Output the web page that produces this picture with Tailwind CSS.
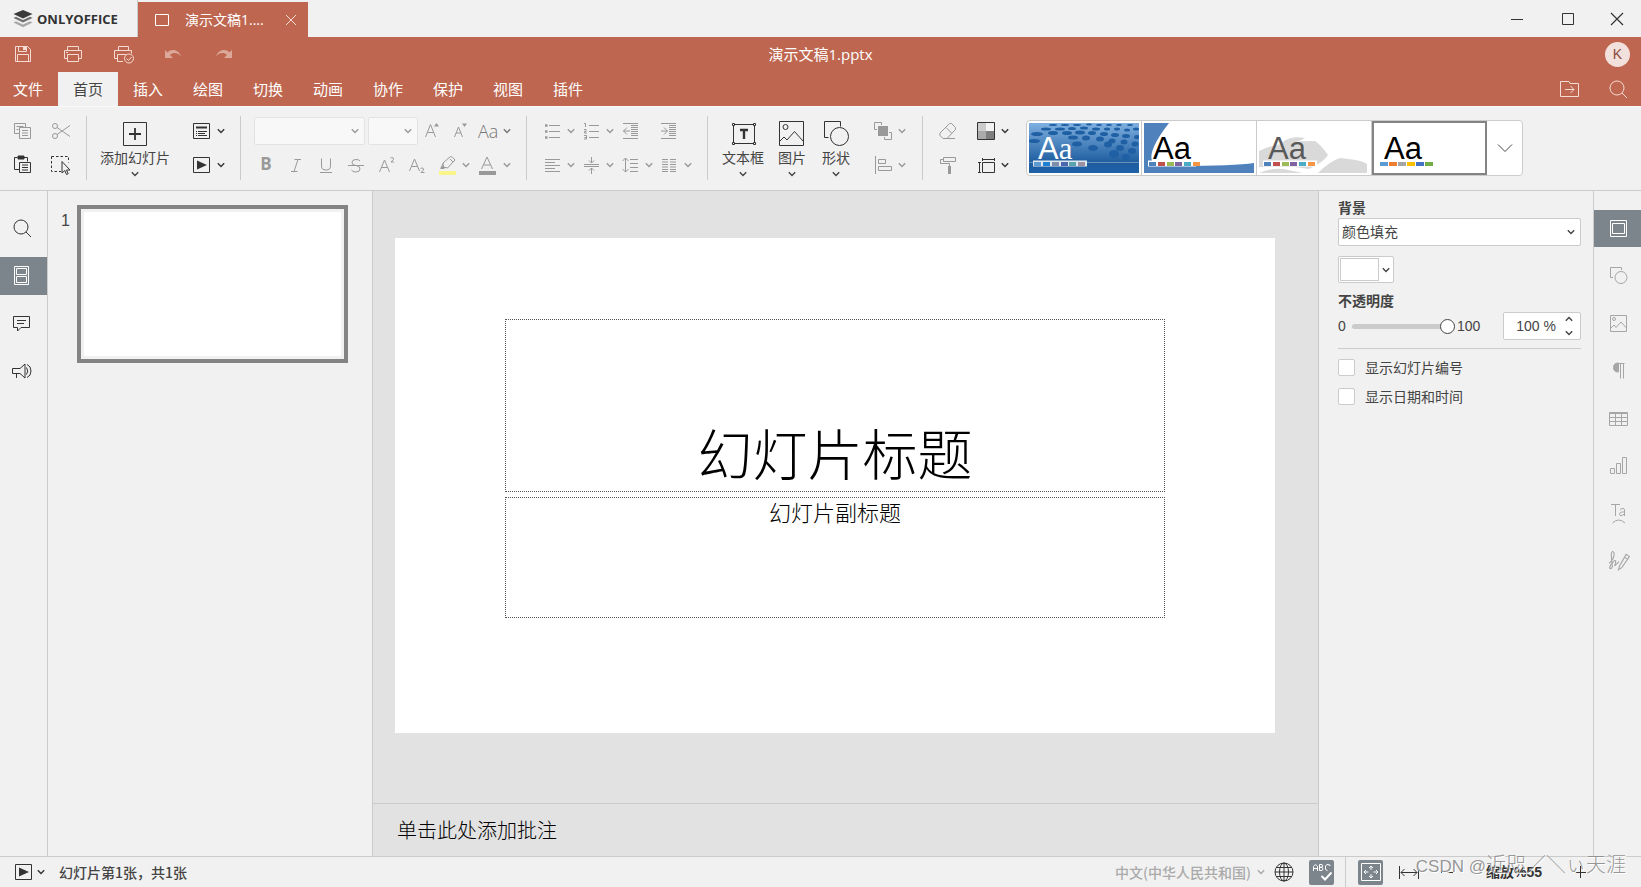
<!DOCTYPE html>
<html lang="zh-CN">
<head>
<meta charset="utf-8">
<title>演示文稿1.pptx - ONLYOFFICE</title>
<script src="https://cdn.jsdelivr.net/npm/@tailwindcss/browser@4"></script>
</head>
<body class="relative h-screen flex flex-col overflow-hidden bg-[#f1f1f1] text-[#444] text-sm font-['Open_Sans','Noto_Sans_CJK_SC',sans-serif]">
<svg class="hidden">
  <symbol id="chev" viewBox="0 0 8 8"><path d="M.8 2.2 4 5.4 7.2 2.2" fill="none" stroke="currentColor" stroke-width="1.4"/></symbol>
  <symbol id="play" viewBox="0 0 20 20"><path d="M2.500 2.500h16v15h-16z" fill="none" stroke="currentColor"/><path d="M6 5.500v9l10-4.500z" fill="currentColor"/></symbol>
  <symbol id="shapes" viewBox="0 0 26 26"><path d="M5.500 17.500H1.500v-16h16v5" fill="none" stroke="currentColor"/><circle cx="16.500" cy="16.500" r="9" fill="none" stroke="currentColor"/></symbol>
  <symbol id="image" viewBox="0 0 26 26"><path d="M.5 1.500h24v24H.5zM1 21l4-4 3 3 7.500-8.500L24 21" fill="none" stroke="currentColor"/><circle cx="6.500" cy="7" r="2.500" fill="none" stroke="currentColor"/></symbol>
  <symbol id="search" viewBox="0 0 20 20"><circle cx="9" cy="9" r="7" fill="none" stroke="currentColor"/><path d="m14 14 5 5" stroke="currentColor"/></symbol>
</svg>

<!-- Window title bar -->
<div class="flex h-[37px] shrink-0 items-end">
  <div class="flex h-[37px] w-[138px] items-center gap-1 pl-[13px] border-r border-[#ccc]">
    <svg class="size-5" viewBox="0 0 20 20"><path d="m10 1 9.500 4L10 9.500.5 5z" fill="#3a3a3a"/><path d="m.5 9 2.500-1.200L10 11l7-3.200L19.500 9 10 13.500z" fill="#6e6e6e"/><path d="m.5 13.500 2.500-1.200 7 3.200 7-3.200 2.500 1.200L10 18.200z" fill="#a8a8a8"/></svg>
    <span class="text-[13px] leading-5 font-bold text-[#333] font-['Open_Sans',sans-serif]">ONLYOFFICE</span>
  </div>
  <div class="flex h-[35px] w-[170px] items-center bg-[#be664f] pl-[17px] text-white">
    <svg class="size-4" viewBox="0 0 16 16"><path d="M.5 2.500h13v11H.5z" fill="none" stroke="#fff"/></svg>
    <span class="ml-[14px] w-24 whitespace-nowrap text-sm">演示文稿1....</span>
    <button class="ml-1" aria-label="关闭标签"><svg class="size-3" viewBox="0 0 12 12"><path d="m1 1 10 10M11 1 1 11" stroke="#f4dcd5"/></svg></button>
  </div>
  <div class="ml-auto flex h-[37px] items-center">
    <button class="grid h-full w-[51px] place-items-center" aria-label="最小化"><svg class="size-[14px]" viewBox="0 0 14 14"><path d="M1 7.500h12" stroke="#333"/></svg></button>
    <button class="grid h-full w-[51px] place-items-center" aria-label="最大化"><svg class="size-[14px]" viewBox="0 0 14 14"><path d="M1.500 1.500h11v11h-11z" fill="none" stroke="#333"/></svg></button>
    <button class="grid h-full w-[48px] place-items-center" aria-label="关闭"><svg class="size-[14px]" viewBox="0 0 14 14"><path d="m1 1 12 12M13 1 1 13" stroke="#333" stroke-width="1.200"/></svg></button>
  </div>
</div>

<!-- Header -->
<header class="shrink-0 bg-[#be664f] text-white">
  <div class="grid h-[35px] grid-cols-[1fr_auto_1fr] items-center pb-px">
    <div class="flex items-center">
      <button class="grid w-[46px] place-items-center" aria-label="保存"><svg class="size-[18px]" viewBox="0 0 18 18" fill="none" stroke="#f4dcd5"><path d="M1.500 1.500h12l3 3v12h-15zM4.500 1.500v5h8v-5M3.500 16.500v-7h11v7"/><path d="M9 2h3v3H9z" fill="#f4dcd5" stroke="none"/></svg></button>
      <button class="grid w-[54px] place-items-center" aria-label="打印"><svg class="size-5" viewBox="0 0 20 20" fill="none" stroke="#f4dcd5"><path d="M4.500 6V2.500h11V6M4.500 14.500h-3v-8h17v8h-3M4.500 10.500h11v7h-11zM3 8.500h2"/></svg></button>
      <button class="grid w-[48px] place-items-center" aria-label="快速打印"><svg class="size-5" viewBox="0 0 20 20" fill="none" stroke="#f4dcd5"><path d="M4.500 6V2.500h10V6M3.500 14.500h-3v-8h17v3M9 17.500H3.500v-7H12"/><circle cx="15" cy="14.500" r="4.500"/><path d="m12.500 14.500 2 2 3-3.500"/></svg></button>
      <button class="grid w-[50px] place-items-center" aria-label="撤销"><svg class="size-[18px]" viewBox="0 0 18 18"><path d="M1 5v8h8L6 10c3-3 8-2.500 11 1.500C15 5 8 3 3.500 7.500z" fill="#dba899"/></svg></button>
      <button class="grid w-[51px] place-items-center" aria-label="重做"><svg class="size-[18px]" viewBox="0 0 18 18"><path d="M17 5v8H9l3-3c-3-3-8-2.500-11 1.500C3 5 10 3 14.500 7.500z" fill="#dba899"/></svg></button>
    </div>
    <h1 class="text-[15px] leading-5">演示文稿1.pptx</h1>
    <div class="flex justify-end pr-[11px]"><button class="size-[25px] rounded-full bg-[#f2e0dc] text-sm leading-none text-[#8d4a3a] font-['Liberation_Sans',sans-serif]">K</button></div>
  </div>
  <div class="flex h-[34px] items-stretch text-[15px]">
    <nav class="flex [&_button]:pt-0.5" aria-label="功能区">
      <button class="w-[58px] pr-0.5">文件</button>
      <button class="w-[60px] bg-[#f1f1f1] text-[#444]">首页</button>
      <button class="w-[60px]">插入</button>
      <button class="w-[60px]">绘图</button>
      <button class="w-[60px]">切换</button>
      <button class="w-[60px]">动画</button>
      <button class="w-[60px]">协作</button>
      <button class="w-[60px]">保护</button>
      <button class="w-[60px]">视图</button>
      <button class="w-[60px]">插件</button>
    </nav>
    <div class="ml-auto flex">
      <button class="grid w-[51px] place-items-center" aria-label="打开文件位置"><svg class="size-5" viewBox="0 0 20 20" fill="none" stroke="#f4dcd5"><path d="M.5 17.500v-15h8.500l1 2h8.500v13zM5 10.500h9M10.500 7l3.500 3.500-3.500 3.500"/></svg></button>
      <button class="grid w-[46px] place-items-center text-[#f4dcd5]" aria-label="搜索"><svg class="size-5"><use href="#search"/></svg></button>
    </div>
  </div>
</header>

<!-- Toolbar -->
<div class="flex h-[85px] shrink-0 items-center border-b border-[#cbcbcb] border-t border-t-[#fafafa] pb-0.5 text-[#999]">
  <div class="grid w-[86px] grid-cols-[38px_38px] grid-rows-[34px_34px] place-items-center pl-1">
    <button aria-label="复制"><svg class="size-5" viewBox="0 0 20 20" fill="none" stroke="currentColor"><path d="M6.500 12.500h-5v-10h11v4M3.500 5.500h7M3.500 8.500h2"/><path d="M6.500 6.500h11v11h-11zM9 9.500h6M9 12h6M9 14.500h6"/></svg></button>
    <button aria-label="剪切"><svg class="size-5" viewBox="0 0 20 20" fill="none" stroke="currentColor"><circle cx="4" cy="5" r="2.500"/><circle cx="4" cy="15" r="2.500"/><path d="M6 13.500 19 4.500M6 6.500l13 9"/></svg></button>
    <button class="text-[#333]" aria-label="粘贴"><svg class="size-5" viewBox="0 0 20 20" fill="none" stroke="currentColor"><path d="M6 14.500H1.500v-12h3M11 2.500h3.500v4"/><path d="M5 1h6v3H5z" fill="currentColor"/><path d="M6.500 7.500h11v10h-11zM9 10h6M9 12.500h6M9 15h6"/></svg></button>
    <button class="text-[#333]" aria-label="全选"><svg class="size-5" viewBox="0 0 20 20" fill="none" stroke="currentColor"><path d="M.5 1.500h17v6M.5 1.500v15H10" stroke-dasharray="2.500 2"/><path d="M11 6.500v11.500l2.800-2.500 1.700 4 1.700-.8-1.700-3.700H19z" fill="#f1f1f1"/></svg></button>
  </div>
  <div class="h-16 w-px bg-[#cbcbcb]"></div>

  <div class="flex w-[153px] items-center text-[#444]">
    <button class="flex h-[68px] w-24 flex-col items-center pt-2 text-[#444]">
      <svg class="size-6 text-[#333]" viewBox="0 0 24 24" fill="none" stroke="currentColor"><path d="M.5.5h23v23H.5z"/><path d="M12 6v12M6 12h12" stroke-width="1.800"/></svg>
      <span class="mt-1 text-sm leading-4 whitespace-nowrap">添加幻灯片</span>
      <svg class="mt-1 size-2"><use href="#chev"/></svg>
    </button>
    <div class="ml-2 grid grid-rows-[34px_34px] items-center text-[#333]">
      <button class="flex items-center gap-[6px]" aria-label="版式"><svg class="size-5" viewBox="0 0 20 20" fill="none" stroke="currentColor"><path d="M2.500 2.500h16v15h-16z"/><path d="M5 6.500h11" stroke-width="2"/><path d="M5 10.500h1M7 10.500h9M5 12.500h1M7 12.500h7M5 14.500h1M7 14.500h9"/></svg><svg class="size-2"><use href="#chev"/></svg></button>
      <button class="flex items-center gap-[6px]" aria-label="播放"><svg class="size-5"><use href="#play"/></svg><svg class="size-2"><use href="#chev"/></svg></button>
    </div>
  </div>
  <div class="h-16 w-px bg-[#cbcbcb]"></div>

  <div class="w-[285px]">
    <div class="flex h-[34px] items-center pl-[13px]">
      <button class="flex h-[28px] w-[111px] items-center justify-end rounded-xs border border-[#e3e3e3] bg-[#f8f8f8] pr-[5px]" aria-label="字体"><svg class="size-2"><use href="#chev"/></svg></button>
      <button class="ml-[3px] flex h-[28px] w-[50px] items-center justify-end rounded-xs border border-[#e3e3e3] bg-[#f8f8f8] pr-[5px]" aria-label="字号"><svg class="size-2"><use href="#chev"/></svg></button>
      <button class="ml-[7px] w-4" aria-label="增大字号"><svg class="size-4" viewBox="0 0 16 16" fill="none" stroke="currentColor"><path d="m.5 14 5-12.500 5 12.500M2.500 9.500h6" /><path d="m9 3.500 2.500-3.500L14 3.500z" fill="currentColor" stroke="none"/></svg></button>
      <button class="ml-3 w-4" aria-label="减小字号"><svg class="size-4" viewBox="0 0 16 16" fill="none" stroke="currentColor"><path d="m1.500 14 4-10 4 10M3 10h5"/><path d="m9 .5 2.500 3.500L14 .5z" fill="currentColor" stroke="none"/></svg></button>
      <button class="ml-[9px] flex items-center gap-[5px] text-[18px] leading-6 font-light text-[#777]" aria-label="更改大小写"><span class="w-5">Aa</span><svg class="size-2"><use href="#chev"/></svg></button>
    </div>
    <div class="flex h-[34px] items-center pl-[10px]">
      <button class="w-[30px] text-[17px] font-bold" aria-label="加粗">B</button>
      <button class="grid w-[30px] place-items-center" aria-label="斜体"><svg class="h-4 w-3" viewBox="0 0 12 16" fill="none" stroke="currentColor"><path d="M4.500 2.500H11M1 14.500h6.500M8 2.500l-4 12"/></svg></button>
      <button class="grid w-[30px] place-items-center" aria-label="下划线"><svg class="h-4 w-3" viewBox="0 0 12 16" fill="none" stroke="currentColor"><path d="M1.500 1.500v7.500q0 4 4.500 4t4.500-4V1.500M0 15.500h12"/></svg></button>
      <button class="grid w-[30px] place-items-center" aria-label="删除线"><svg class="size-4" viewBox="0 0 16 16" fill="none" stroke="currentColor"><path d="M12 4Q11 2.500 8 2.500 4 2.500 4 5.500T8 8.500t4 3.500q0 3-4 3-3.500 0-4.500-2M0 8.500h16"/></svg></button>
      <button class="grid w-[31px] place-items-center" aria-label="上标"><svg class="h-4 w-4" viewBox="0 0 16 16" fill="none" stroke="currentColor"><path d="m.5 15 5-12 5 12M2.500 10.500h6M11.500 1Q13 0 14.300 1T12 5h3"/></svg></button>
      <button class="grid w-[30px] place-items-center" aria-label="下标"><svg class="h-4 w-4" viewBox="0 0 16 16" fill="none" stroke="currentColor"><path d="m.5 14 5-12 5 12M2.500 9.500h6M11.500 11.500q1.500-1.200 2.800 0t-2.300 4h3.500"/></svg></button>
      <button class="ml-1.5 flex items-center gap-[4px]" aria-label="突出显示颜色"><svg class="size-5" viewBox="0 0 20 20" fill="none" stroke="currentColor"><path d="m5 8 7.500-6.500q2 0 4.500 3.500L9.500 13 5.500 12zM12 4l3 3M5 8.500 3 13l4-.500"/><path d="M2 14h4l1-1.500L4.500 11z" fill="currentColor" stroke="none"/><path d="M1 16h17v4H1z" fill="#f8f58a" stroke="none"/></svg><svg class="size-2"><use href="#chev"/></svg></button>
      <button class="ml-2 flex items-center gap-[5px]" aria-label="字体颜色"><svg class="size-5" viewBox="0 0 20 20" fill="none" stroke="currentColor"><path d="m3.500 14 5.500-12 5.500 12M5.500 10h7"/><path d="M1 16h17v4H1z" fill="#999" stroke="none"/></svg><svg class="size-2"><use href="#chev"/></svg></button>
    </div>
  </div>
  <div class="h-16 w-px bg-[#cbcbcb]"></div>

  <div class="grid w-[180px] grid-cols-[39px_39px_39px_39px] grid-rows-[34px_34px] items-center pl-4">
    <button class="flex items-center gap-1.5" aria-label="项目符号"><svg class="size-[18px]" viewBox="0 0 18 18" stroke="currentColor"><path d="M6 3.500h11M6 9.500h11M6 15.500h11"/><path d="M2 3.500h2.500M2 9.500h2.500M2 15.500h2.500" stroke-width="2.500"/></svg><svg class="size-2"><use href="#chev"/></svg></button>
    <button class="flex items-center gap-1.5" aria-label="编号"><svg class="size-[18px]" viewBox="0 0 18 18" fill="none" stroke="currentColor"><path d="M7 3.500h10M7 9.500h10M7 15.500h10M2 1.500h1.500V5M2 7.500h2v2H2.500V11H5M2 13.500h2.500v3.500H2M2.500 15.500h2"/></svg><svg class="size-2"><use href="#chev"/></svg></button>
    <button aria-label="减少缩进"><svg class="size-[18px]" viewBox="0 0 18 18" fill="none" stroke="currentColor"><path d="M2 1.500h15M10 3.500h7M10 5.500h7M10 7.500h7M10 9.500h7M10 11.500h7M10 13.500h7M2 16.500h15M2.500 9H9M6 5.500 2.500 9 6 12.500"/></svg></button>
    <button aria-label="增加缩进"><svg class="size-[18px]" viewBox="0 0 18 18" fill="none" stroke="currentColor"><path d="M1 1.500h15M9 3.500h7M9 5.500h7M9 7.500h7M9 9.500h7M9 11.500h7M9 13.500h7M1 16.500h15M1 9h6.500M4 5.500 7.500 9 4 12.500"/></svg></button>
    <button class="flex items-center gap-1.5" aria-label="水平对齐"><svg class="size-[18px]" viewBox="0 0 18 18" stroke="currentColor"><path d="M2 3.500h15M2 6.500h10M2 9.500h15M2 12.500h10M2 15.500h15"/></svg><svg class="size-2"><use href="#chev"/></svg></button>
    <button class="flex items-center gap-1.5" aria-label="垂直对齐"><svg class="size-[18px]" viewBox="0 0 18 18" fill="none" stroke="currentColor"><path d="M2 8.500h15M2 10.500h15M9.500 1v6M7 4.500 9.500 7 12 4.500M9.500 18v-6M7 14.500l2.500-2.500 2.500 2.500"/></svg><svg class="size-2"><use href="#chev"/></svg></button>
    <button class="flex items-center gap-1.5" aria-label="行距"><svg class="size-[18px]" viewBox="0 0 18 18" fill="none" stroke="currentColor"><path d="M4.500 2v14M1.500 5l3-3 3 3M1.500 13l3 3 3-3M9 3.500h8M9 7.500h8M9 11.500h8M9 15.500h8"/></svg><svg class="size-2"><use href="#chev"/></svg></button>
    <button class="flex items-center gap-1.5" aria-label="分栏"><svg class="size-[18px]" viewBox="0 0 18 18" stroke="currentColor"><path d="M2 3.500h6M10 3.500h6M2 6h6M10 6h6M2 8.500h6M10 8.500h6M2 11h6M10 11h6M2 13.500h6M10 13.500h6M2 15.500h6M10 15.500h6"/></svg><svg class="size-2"><use href="#chev"/></svg></button>
  </div>
  <div class="h-16 w-px bg-[#cbcbcb]"></div>

  <div class="flex w-[214px] items-center pl-[7px]">
    <button class="flex h-[68px] w-14 flex-col items-center pt-1.5 text-[#444]">
      <svg class="size-[26px] text-[#333]" viewBox="0 0 26 26" fill="none" stroke="currentColor"><path d="M3.500 4.500h21v19h-21z"/><path d="M2.500 3.500h2v2h-2zM23.500 3.500h2v2h-2zM2.500 22.500h2v2h-2zM23.500 22.500h2v2h-2z" fill="#f1f1f1"/><path d="M10 10h8M14 10v9" stroke-width="2.400"/></svg>
      <span class="mt-1 text-sm leading-4">文本框</span>
      <svg class="mt-1 size-2"><use href="#chev"/></svg>
    </button>
    <button class="flex h-[68px] w-[42px] flex-col items-center pt-1.5 text-[#444]">
      <svg class="size-[26px] text-[#333]"><use href="#image"/></svg>
      <span class="mt-1 text-sm leading-4">图片</span>
      <svg class="mt-1 size-2"><use href="#chev"/></svg>
    </button>
    <button class="flex h-[68px] w-[46px] flex-col items-center pt-1.5 text-[#444]">
      <svg class="size-[26px] text-[#333]"><use href="#shapes"/></svg>
      <span class="mt-1 text-sm leading-4">形状</span>
      <svg class="mt-1 size-2"><use href="#chev"/></svg>
    </button>
    <div class="ml-[14px] grid grid-rows-[34px_34px] items-center">
      <button class="flex items-center gap-[5px]" aria-label="排列"><svg class="size-5" viewBox="0 0 20 20" fill="none" stroke="currentColor"><path d="M4 8.500H1.500v-7h7V4M16 11.500h2.500v7h-7V16"/><path d="M5 5h10v10H5z" fill="currentColor" stroke="none"/></svg><svg class="size-2"><use href="#chev"/></svg></button>
      <button class="flex items-center gap-[5px]" aria-label="对齐"><svg class="size-5" viewBox="0 0 20 20" fill="none" stroke="currentColor"><path d="M2.500 1v18M5.500 4.500h7v4h-7zM5.500 11.500h13v4h-13z"/></svg><svg class="size-2"><use href="#chev"/></svg></button>
    </div>
  </div>
  <div class="h-16 w-px bg-[#cbcbcb]"></div>

  <div class="grid w-[103px] shrink-0 grid-cols-[38px_38px] grid-rows-[34px_34px] items-center pl-[15px]">
    <button aria-label="清除样式"><svg class="size-5" viewBox="0 0 20 20" fill="none" stroke="currentColor"><path d="M11.500 2.500h2l4 4v2l-8.500 9H5l-3-3V12zM8 6.500l5.500 5.500M9 17.500h8"/></svg></button>
    <button class="flex items-center gap-[5px] text-[#333]" aria-label="更改颜色主题"><svg class="size-5" viewBox="0 0 20 20"><path d="M2 2h8v8H2z" fill="#ccc"/><path d="M10 2h8v8h-8z" fill="#f4f4f4"/><path d="M2 10h8v8H2z" fill="#aaa"/><path d="M10 10h8v8h-8z" fill="#7f7f7f"/><path d="M1.500 1.500h17v17h-17z" fill="none" stroke="currentColor"/></svg><svg class="size-2"><use href="#chev"/></svg></button>
    <button aria-label="复制样式"><svg class="size-5" viewBox="0 0 20 20" fill="none" stroke="currentColor"><path d="M5.500 2.500h12v4h-12zM5.500 4.500h-3v4h9V11"/><path d="M10 11h3v8h-3z" fill="currentColor" stroke="none"/></svg></button>
    <button class="flex items-center gap-[5px] text-[#333]" aria-label="幻灯片大小"><svg class="size-5" viewBox="0 0 20 20" fill="none" stroke="currentColor"><path d="M6.500 7.500h12v10h-12zM6.500 4.500h12M6.500 3v3M18.500 3v3M3.500 7.500v10M2 7.500h3M2 17.500h3"/></svg><svg class="size-2"><use href="#chev"/></svg></button>
  </div>

  <!-- Theme gallery -->
  <div class="flex h-14 shrink-0 rounded-sm border border-[#cbcbcb] bg-white font-['Liberation_Sans',sans-serif]">
    <button class="grid w-[115px] place-items-center border-r border-[#cbcbcb]" aria-label="主题 1">
      <svg class="h-[50px] w-[110px]" viewBox="0 0 110 50">
        <defs><linearGradient id="g1" x1="0" y1="0" x2="0" y2="1"><stop offset="0" stop-color="#7fb0e0"/><stop offset=".8" stop-color="#1d5c9f"/><stop offset="1" stop-color="#1f62a8"/></linearGradient></defs>
        <path d="M0 0h110v50H0z" fill="url(#g1)"/>
        <g fill="#1f5fa3">
          <ellipse cx="24" cy="2" rx="4" ry="1"/><ellipse cx="36" cy="2" rx="4" ry="1"/><ellipse cx="48" cy="2" rx="4" ry="1"/><ellipse cx="60" cy="1.500" rx="3" ry="1"/><ellipse cx="70" cy="2" rx="3" ry="1"/><ellipse cx="80" cy="2" rx="3" ry="1"/><ellipse cx="90" cy="2" rx="3" ry="1"/><ellipse cx="101" cy="2" rx="3" ry="1"/>
          <ellipse cx="17" cy="6" rx="5" ry="1.500"/><ellipse cx="31" cy="6" rx="5" ry="1.500"/><ellipse cx="43" cy="5.500" rx="4" ry="1.500"/><ellipse cx="55" cy="5" rx="4" ry="1.500"/><ellipse cx="67" cy="6" rx="4" ry="1.500"/><ellipse cx="78" cy="6" rx="3" ry="1.500"/><ellipse cx="88" cy="6" rx="3" ry="1.500"/><ellipse cx="98" cy="7" rx="3" ry="1.500"/><ellipse cx="107" cy="6" rx="3" ry="1.500"/>
          <ellipse cx="8" cy="11" rx="6" ry="2"/><ellipse cx="24" cy="10" rx="5" ry="2"/><ellipse cx="38" cy="10" rx="5" ry="2"/><ellipse cx="51" cy="9.500" rx="5" ry="2"/><ellipse cx="63" cy="10" rx="4" ry="2"/><ellipse cx="75" cy="11" rx="4" ry="2"/><ellipse cx="86" cy="12" rx="4" ry="2"/><ellipse cx="97" cy="13" rx="4" ry="2"/><ellipse cx="108" cy="14" rx="3" ry="2"/>
          <ellipse cx="5" cy="18" rx="6" ry="2"/><ellipse cx="44" cy="14.500" rx="5" ry="2"/><ellipse cx="57" cy="15" rx="4" ry="2.500"/><ellipse cx="71" cy="16" rx="4" ry="2.500"/><ellipse cx="83" cy="18" rx="3.500" ry="2.500"/><ellipse cx="95" cy="19" rx="3.500" ry="2.500"/><ellipse cx="106" cy="21" rx="3.500" ry="2.500"/>
          <ellipse cx="48" cy="21" rx="5" ry="2.500"/><ellipse cx="64" cy="25" rx="5" ry="3"/><ellipse cx="79" cy="21.500" rx="4" ry="3"/><ellipse cx="91" cy="25" rx="4" ry="3"/><ellipse cx="103" cy="28" rx="4" ry="3"/><ellipse cx="85" cy="31" rx="5" ry="4" /><ellipse cx="97" cy="34" rx="4" ry="3"/>
        </g>
        <path d="M0 39.500h110" stroke="#6b90b5"/>
        <text x="9" y="36" fill="#fff" font-size="31">A<tspan font-family="Liberation Serif">a</tspan></text>
        <path d="M4 37.500h54v6H4z" fill="#dfe7ef"/>
        <g><path d="M5 39h7v4H5z" fill="#5b9bd0"/><path d="M14 39h7v4h-7z" fill="#1f7fd0"/><path d="M23 39h7v4h-7z" fill="#7f8fa9"/><path d="M32 39h7v4h-7z" fill="#4a66ac"/><path d="M40 39h7v4h-7z" fill="#5aa2ae"/><path d="M49 39h7v4h-7z" fill="#9d90a0"/></g>
      </svg>
    </button>
    <button class="grid w-[115px] place-items-center border-r border-[#cbcbcb]" aria-label="主题 2">
      <svg class="h-[50px] w-[110px]" viewBox="0 0 110 50">
        <path d="M0 0h110v50H0z" fill="#4f81bd"/><path d="M25 0h85v40Q90 43 35 43L8 38Q4 27 25 0z" fill="#fff"/>
        <path d="M4 37.500h48v6H4z" fill="#fff"/>
        <text x="9" y="36" fill="#000" font-size="31">Aa</text>
        <path d="M5 39h7v4H5z" fill="#4f81bd"/><path d="M14 39h7v4h-7z" fill="#c0504d"/><path d="M23 39h7v4h-7z" fill="#9bbb59"/><path d="M31 39h7v4h-7z" fill="#8064a2"/><path d="M40 39h7v4h-7z" fill="#4bacc6"/><path d="M49 39h7v4h-7z" fill="#f79646"/>
      </svg>
    </button>
    <button class="grid w-[115px] place-items-center border-r border-[#cbcbcb]" aria-label="主题 3">
      <svg class="h-[50px] w-[110px]" viewBox="0 0 110 50">
        <path d="M0 28Q20 18 56 18 62 22 69 32 66 38 50 46L36 44H0zM22 20Q32 12 46 15 42 18 22 23zM0 50q10-5 24-4l20 4zM59 50q12-12 22-15 22 2 27 6v9z" fill="#d9d9d9"/>
        <path d="M4 37.500h54v6H4z" fill="#fff"/>
        <text x="9" y="36" fill="#595959" font-size="31">Aa</text>
        <path d="M5 39h7v4H5z" fill="#4f81bd"/><path d="M14 39h7v4h-7z" fill="#c0504d"/><path d="M23 39h7v4h-7z" fill="#9bbb59"/><path d="M31 39h7v4h-7z" fill="#8064a2"/><path d="M40 39h7v4h-7z" fill="#4bacc6"/><path d="M49 39h7v4h-7z" fill="#f79646"/>
      </svg>
    </button>
    <button class="grid w-[115px] place-items-center border-2 border-[#848484]" aria-label="主题 4">
      <svg class="h-[50px] w-[110px]" viewBox="0 0 110 50">
        <text x="9" y="36" fill="#000" font-size="31">Aa</text>
        <path d="M5 39h8v4H5z" fill="#5b9bd5"/><path d="M14 39h8v4h-8z" fill="#ed7d31"/><path d="M23 39h8v4h-8z" fill="#a5a5a5"/><path d="M32 39h8v4h-8z" fill="#ffc000"/><path d="M41 39h8v4h-8z" fill="#4472c4"/><path d="M50 39h8v4h-8z" fill="#70ad47"/>
      </svg>
    </button>
    <button class="grid w-[35px] place-items-center text-[#444]" aria-label="更多主题"><svg class="size-4" viewBox="0 0 16 16"><path d="m1 4.500 7 7 7-7" fill="none" stroke="currentColor"/></svg></button>
  </div>
</div>

<!-- Workspace -->
<main class="flex min-h-0 flex-1">
  <nav class="flex w-12 shrink-0 flex-col gap-[10px] border-r border-[#cbcbcb] pt-[18px] text-[#333] [&_button]:pr-[3px]" aria-label="左侧面板">
    <button class="grid h-[38px] place-items-center" aria-label="查找"><svg class="size-5"><use href="#search"/></svg></button>
    <button class="grid h-[38px] place-items-center bg-[#7d858c] text-white" aria-label="幻灯片"><svg class="size-5" viewBox="0 0 20 20" fill="none" stroke="currentColor"><path d="M2.500.5h14v18h-14zM4.500 2.500h10v6h-10zM4.500 10.500h10v6h-10z"/></svg></button>
    <button class="grid h-[38px] place-items-center" aria-label="批注"><svg class="size-5" viewBox="0 0 20 20" fill="none" stroke="currentColor"><path d="M1.500 2.500h16v11H9L5.500 17v-3.500h-4zM5 6.500h9M5 9.500h7"/></svg></button>
    <button class="grid h-[38px] place-items-center" aria-label="反馈与支持"><svg class="size-5" viewBox="0 0 20 20" fill="none" stroke="currentColor"><path d="M.5 6.500H8l5-4.500v14l-5-4.500H.5zM4.500 11.500V16M14.500 5.500q2.500 3.500 0 7M15 2.500q4 1.500 4 6.500t-4 6.500"/></svg></button>
  </nav>

  <section class="flex w-[325px] shrink-0 items-start gap-2 border-r border-[#cbcbcb] pt-[14px] pl-[13px] font-['Liberation_Sans',sans-serif]" aria-label="幻灯片列表">
    <span class="w-2 pt-1 text-base leading-6">1</span>
    <button class="h-[158px] w-[271px] border-4 border-[#848484] p-[3px]" aria-label="幻灯片 1"><span class="block h-full bg-white"></span></button>
  </section>

  <section class="flex min-w-0 flex-1 flex-col bg-[#e2e2e2] text-black font-['Noto_Sans_CJK_SC',sans-serif]">
    <div class="min-h-0 flex-1 pt-[47px] pr-[43px] pl-[22px]">
      <div class="flex aspect-[16/9] flex-col items-center gap-[5px] bg-white pt-[81px] font-light">
        <div class="flex h-[173px] w-3/4 items-end justify-center border border-dotted border-[#555] pb-3 text-[55px] leading-[56px]">幻灯片标题</div>
        <div class="h-[121px] w-3/4 border border-dotted border-[#555] text-center text-[22px] leading-6 pt-px">幻灯片副标题</div>
      </div>
    </div>
    <div class="flex h-[53px] shrink-0 items-center border-t border-[#cbcbcb] pl-6 text-xl font-light">单击此处添加批注</div>
  </section>

  <aside class="w-[276px] shrink-0 border-x border-[#cbcbcb] pt-[7px] pr-3 pl-[19px] font-['Liberation_Sans','Noto_Sans_CJK_SC',sans-serif]">
    <label for="fill" class="block text-sm font-bold">背景</label>
    <div class="relative">
      <select id="fill" class="block h-[28px] w-full appearance-none rounded-xs border border-[#cbcbcb] bg-white pl-[3px] text-sm"><option>颜色填充</option></select>
      <svg class="pointer-events-none absolute top-[10px] right-[6px] size-2"><use href="#chev"/></svg>
    </div>
    <button class="mt-[10px] flex h-[27px] w-14 items-center gap-[3px] rounded-xs border border-[#cbcbcb] bg-white pl-px" aria-label="背景颜色"><span class="h-[23px] w-[39px] border border-[#cbcbcb]"></span><svg class="size-2"><use href="#chev"/></svg></button>
    <label for="opacity" class="mt-2 block text-sm font-bold">不透明度</label>
    <div class="mt-px flex h-[28px] items-center text-sm">
      <span class="w-[14px]">0</span>
      <input id="opacity" type="range" min="0" max="100" value="100" class="h-[15px] w-[103px] appearance-none bg-transparent [&::-webkit-slider-runnable-track]:h-[5px] [&::-webkit-slider-runnable-track]:rounded-full [&::-webkit-slider-runnable-track]:bg-[#cbcbcb] [&::-webkit-slider-thumb]:-mt-[5px] [&::-webkit-slider-thumb]:size-[15px] [&::-webkit-slider-thumb]:appearance-none [&::-webkit-slider-thumb]:rounded-full [&::-webkit-slider-thumb]:border [&::-webkit-slider-thumb]:border-solid [&::-webkit-slider-thumb]:border-[#444] [&::-webkit-slider-thumb]:bg-white">
      <span class="ml-[2px]">100</span>
      <div class="ml-auto flex h-[28px] w-[78px] items-center rounded-xs border border-[#cbcbcb] bg-white pr-[7px]">
        <input type="text" value="100 %" aria-label="不透明度数值" class="w-[52px] bg-transparent text-right">
        <div class="ml-auto flex flex-col gap-[6px]"><button aria-label="增加"><svg class="size-2 rotate-180"><use href="#chev"/></svg></button><button aria-label="减少"><svg class="size-2"><use href="#chev"/></svg></button></div>
      </div>
    </div>
    <hr class="mt-2 border-[#cbcbcb]">
    <label class="mt-2 flex h-[21px] items-center gap-[10px] text-sm"><input type="checkbox" class="size-[17px] appearance-none rounded-xs border border-[#cbcbcb] bg-white">显示幻灯片编号</label>
    <label class="mt-2 flex h-[21px] items-center gap-[10px] text-sm"><input type="checkbox" class="size-[17px] appearance-none rounded-xs border border-[#cbcbcb] bg-white">显示日期和时间</label>
  </aside>

  <nav class="w-[47px] shrink-0 pt-[19px] text-[#a6a6a6] [&_button]:pl-[2px]" aria-label="右侧设置">
    <div class="flex h-[370px] flex-col justify-between">
      <button class="grid h-[37px] place-items-center bg-[#7d858c] text-white" aria-label="幻灯片设置"><svg class="size-5" viewBox="0 0 20 20" fill="none" stroke="currentColor"><path d="M1.500 1.500h16v16h-16zM3.500 4.500h12v10h-12z"/></svg></button>
      <button class="grid h-[37px] place-items-center" aria-label="形状设置"><svg class="size-5" viewBox="0 0 20 20" fill="none" stroke="currentColor"><path d="M4 11.500H1.500v-10h11V4"/><circle cx="12" cy="11.500" r="6"/></svg></button>
      <button class="grid h-[37px] place-items-center" aria-label="图像设置"><svg class="size-5" viewBox="0 0 20 20" fill="none" stroke="currentColor"><path d="M1.500 1.500h16v16h-16zM2 14l3-3 2 2.500 5-5.500 5.500 6"/><circle cx="5" cy="5" r="1.500"/></svg></button>
      <button class="grid h-[37px] place-items-center" aria-label="段落设置"><svg class="size-5" viewBox="0 0 20 20" fill="none" stroke="currentColor"><path d="M9 2.500h6.500M11.500 2.500V17.500M14.500 2.500V17.500"/><path d="M9.500 2v9Q4.500 11 4.500 6.500T9.500 2z" fill="currentColor"/></svg></button>
      <button class="grid h-[37px] place-items-center" aria-label="表格设置"><svg class="size-5" viewBox="0 0 20 20" fill="none" stroke="currentColor"><path d="M.5 3.500h18v13H.5zM.5 4.500h18M.5 8.500h18M.5 12.500h18M6.500 4v12M12.500 4v12"/></svg></button>
      <button class="grid h-[37px] place-items-center" aria-label="图表设置"><svg class="size-5" viewBox="0 0 20 20" fill="none" stroke="currentColor"><path d="M1.500 12.500h4v5h-4zM7.500 7.500h4v10h-4zM13.500 1.500h4v16h-4z"/></svg></button>
      <button class="grid h-[37px] place-items-center" aria-label="艺术字设置"><svg class="size-5" viewBox="0 0 20 20" fill="none" stroke="currentColor"><path d="M2 .5h9M6.500.5V12M11 5.500Q15 3 15.500 6v6M15.500 8q-5-.500-5 2.300 .5 2.700 5-.3M3.500 19q6-6 12.500 0"/></svg></button>
      <button class="grid h-[37px] place-items-center" aria-label="签名设置"><svg class="size-[22px]" viewBox="0 0 20 20" fill="none" stroke="currentColor"><path d="M1 12Q6 8 5.500 2.500 4 0 3 3q0 7 1 12-1 3-2.500 1.500 0-3 3.500-6t1 4l4-4"/><path d="m10.500 14.500 6-10.500 3 2-7 10-3 2zM15 6.500l3 2"/></svg></button>
    </div>
  </nav>
</main>

<!-- Status bar -->
<footer class="flex h-[31px] shrink-0 items-center border-t border-[#cbcbcb] text-sm">
  <button class="ml-[13px] flex items-center gap-1 text-[#333]" aria-label="开始幻灯片放映"><svg class="size-5"><use href="#play"/></svg><svg class="size-2"><use href="#chev"/></svg></button>
  <span class="ml-[14px] font-medium font-['Noto_Sans_CJK_SC',sans-serif]">幻灯片第1张，共1张</span>
  <button class="ml-auto flex items-center gap-[6px] font-medium text-[#aaa] font-['Noto_Sans_CJK_SC',sans-serif]"><span>中文(中华人民共和国)</span><svg class="size-2"><use href="#chev"/></svg></button>
  <button class="ml-[9px]" aria-label="设置文档语言"><svg class="size-5" viewBox="0 0 20 20" fill="none" stroke="#333"><circle cx="10" cy="10" r="9"/><ellipse cx="10" cy="10" rx="4.500" ry="9"/><path d="M10 1v18M1 10h18M2.500 5.500h15M2.500 14.500h15"/></svg></button>
  <button class="ml-[15px] grid size-[25px] place-items-center rounded-xs bg-[#7d858c]" aria-label="拼写检查"><svg class="size-5" viewBox="0 0 20 20" fill="none" stroke="#fff"><path d="M1.500 9V4.500Q3.500 1 5.500 4.500V9M1.500 6.500h4M7.500 2.500V8.500h2.500q2-1.500 0-3.200H7.500h2.500q1.500-1.500 0-2.800zM18 3q-4-1.500-4.500 1v3q.5 1.500 2 1.500M18 3v1"/><path d="m9.500 14 3.500 3.500 6.500-7" stroke-width="2"/></svg></button>
  <div class="ml-[11px] h-[31px] w-px bg-[#cbcbcb]"></div>
  <button class="ml-3 grid size-[25px] place-items-center rounded-xs bg-[#7d858c]" aria-label="适合幻灯片"><svg class="size-5" viewBox="0 0 20 20" fill="none" stroke="#fff"><path d="M.5 1.500h19v17H.5zM10 4v4M10 12v4M3 10h4.500M12.500 10H17M8 6l2-2 2 2M8 14l2 2 2-2M5 8l-2 2 2 2M15 8l2 2-2 2"/></svg></button>
  <button class="ml-4" aria-label="适合宽度"><svg class="size-5" viewBox="0 0 20 20" fill="none" stroke="#333"><path d="M.5 4v13M19.500 4v13M2 10.500h16M5.500 7 2 10.500 5.500 14M14.500 7l3.500 3.500-3.500 3.500"/></svg></button>
  <button class="ml-[22px]" aria-label="缩小"><svg class="h-3 w-3" viewBox="0 0 12 12"><path d="M0 6.500h12" stroke="#333"/></svg></button>
  <span class="ml-[33px] w-[58px] whitespace-nowrap font-bold text-[#333] font-['Liberation_Sans','Noto_Sans_CJK_SC',sans-serif]">缩放%55</span>
  <button class="mr-[55px] ml-[30px]" aria-label="放大"><svg class="h-3 w-3" viewBox="0 0 12 12"><path d="M0 6.500h12M6.500 0v12" stroke="#333"/></svg></button>
</footer>

<div class="pointer-events-none absolute right-[15px] bottom-1 text-xl leading-8 whitespace-nowrap font-light text-[#8a8a8a]/90 text-shadow-[1px_1px_0_#fff] font-['Noto_Sans_CJK_SC',sans-serif]"><span class="text-[17px] font-normal font-['Liberation_Sans',sans-serif]">CSDN @</span>近咫／＼ぃ天涯</div>
</body>
</html>
